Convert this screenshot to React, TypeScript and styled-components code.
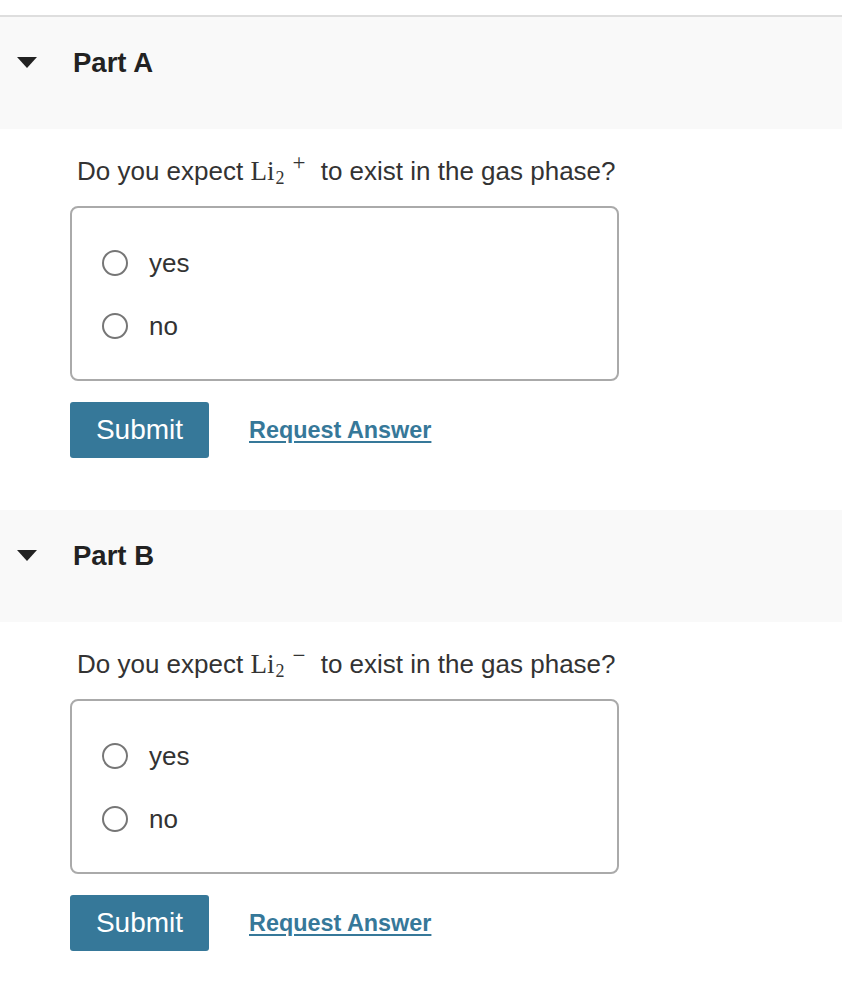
import React from "react";
import styled, { createGlobalStyle } from "styled-components";

const GlobalStyle = createGlobalStyle`
  html, body {
    margin: 0;
    padding: 0;
    background: #ffffff;
    font-family: "Liberation Sans", Arial, sans-serif;
    color: #333333;
  }
`;

const Page = styled.div`
  padding-top: 15px;
`;

const Section = styled.section`
  padding-bottom: 52px;
`;

const Header = styled.div<{ $top?: boolean }>`
  display: flex;
  align-items: center;
  height: ${(p) => (p.$top ? "114px" : "112px")};
  padding-bottom: 21px;
  background: #f9f9f9;
  border-top: ${(p) => (p.$top ? "2px solid #dedede" : "none")};
  box-sizing: border-box;
`;

const Caret = styled.span`
  width: 0;
  height: 0;
  margin-left: 17px;
  margin-right: 36px;
  border-left: 10.5px solid transparent;
  border-right: 10.5px solid transparent;
  border-top: 11px solid #222222;
`;

const Title = styled.h2`
  margin: 0;
  font-size: 27.5px;
  font-weight: bold;
  line-height: 32px;
  color: #222222;
`;

const Body = styled.div`
  padding-left: 70px;
`;

const Question = styled.p`
  margin: 25px 0 0 7px;
  font-size: 26px;
  line-height: 34px;
  color: #333333;
`;

const Math = styled.span`
  font-family: "Liberation Serif", "Times New Roman", serif;
  font-size: 27px;
  line-height: 0;
  margin-right: 8px;
`;

const Sub = styled.sub`
  font-size: 18px;
  line-height: 0;
  vertical-align: -4px;
  margin-left: 1px;
`;

const Sup = styled.sup`
  font-size: 23px;
  line-height: 0;
  vertical-align: 10px;
  margin-left: 8px;
`;

const Choices = styled.div`
  margin-top: 18px;
  width: 549px;
  box-sizing: border-box;
  border: 2px solid #aaaaaa;
  border-radius: 8px;
  padding: 36px 30px 34px;
  display: flex;
  flex-direction: column;
  gap: 25px;
`;

const Choice = styled.label`
  display: flex;
  align-items: center;
  gap: 21px;
  font-size: 26px;
  line-height: 38px;
  color: #333333;
`;

const Radio = styled.span`
  width: 26px;
  height: 26px;
  border: 2px solid #767676;
  border-radius: 50%;
  box-sizing: border-box;
  background: #ffffff;
`;

const Actions = styled.div`
  display: flex;
  align-items: center;
  gap: 40px;
  margin-top: 21px;
`;

const Button = styled.button`
  width: 139px;
  height: 56px;
  background: #367899;
  color: #ffffff;
  border: none;
  border-radius: 3px;
  font-family: "Liberation Sans", Arial, sans-serif;
  font-size: 28px;
  padding: 0;
`;

const Link = styled.a`
  color: #367899;
  font-weight: bold;
  font-size: 23.4px;
  text-decoration: underline;
  text-underline-offset: 3px;
  text-decoration-thickness: 2px;
`;

type PartProps = { label: string; charge: string; top?: boolean };

const Part = ({ label, charge, top }: PartProps) => (
  <Section>
    <Header $top={top}>
      <Caret />
      <Title>Part {label}</Title>
    </Header>
    <Body>
      <Question>
        Do you expect{" "}
        <Math>
          Li<Sub>2</Sub>
          <Sup>{charge}</Sup>
        </Math>{" "}
        to exist in the gas phase?
      </Question>
      <Choices>
        <Choice>
          <Radio />
          yes
        </Choice>
        <Choice>
          <Radio />
          no
        </Choice>
      </Choices>
      <Actions>
        <Button>Submit</Button>
        <Link href="#">Request Answer</Link>
      </Actions>
    </Body>
  </Section>
);

const App = () => (
  <Page>
    <GlobalStyle />
    <Part label="A" charge="+" top />
    <Part label="B" charge="−" />
  </Page>
);

export default App;
